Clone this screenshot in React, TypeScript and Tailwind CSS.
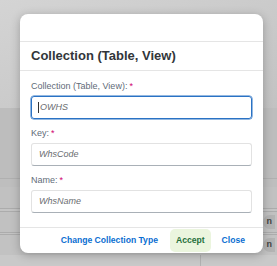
import React from "react";

function Field({
  label,
  placeholder,
  focused,
}: {
  label: string;
  placeholder: string;
  focused?: boolean;
}) {
  return (
    <div className="flex flex-col">
      <label className="h-[11px] text-[9px] leading-[11px] text-[#5f6b78]">
        {label}
        <span className="ml-[2px] text-[#d0006f]">*</span>
      </label>
      <div
        className={
          focused
            ? "mt-[4px] flex h-[23px] items-center rounded-[3px] border border-[#2a72c4] px-[6px] shadow-[0_0_0_0.5px_#2a72c4]"
            : "mt-[4px] flex h-[23px] items-center rounded-[3px] border border-[#e2e2e2] border-b-[#a9b0b7] px-[7px]"
        }
      >
        {focused && <span className="mr-[1px] h-[11px] w-px bg-[#333]" />}
        <span className="text-[9px] italic text-[#6a6d70]">{placeholder}</span>
      </div>
    </div>
  );
}

export default function App() {
  return (
    <div
      className="relative h-[266px] w-[277px] overflow-hidden bg-[#c3c3c3]"
      style={{ fontFamily: '"Liberation Sans", Arial, sans-serif' }}
    >
      {/* page behind the overlay */}
      <div className="flex h-full flex-col">
        <div className="h-[108px] bg-gradient-to-br from-[#d4d4d4] to-[#c2c2c2]" />
        <div className="h-[70px] bg-[#bdbdbd]" />
        <div className="h-[9px] border-t border-[#b0b0b0] bg-[#bebebe]" />
        <div className="h-[21px] bg-[#c1c1c1]" />
        <div className="h-[4px] border-y border-[#acacac] bg-[#c4c4c4]" />
        <div className="flex h-[20px] items-center justify-end bg-[#c1c1c1] pr-[2px]">
          <span className="rounded-l-full bg-[#b3b3b3] pl-[4px] pr-[3px] text-[9px] font-bold text-[#444]">
            n
          </span>
        </div>
        <div className="h-[3px] border-y border-[#acacac] bg-[#c4c4c4]" />
        <div className="flex h-[20px] items-center justify-end bg-[#c2c2c2] pr-[2px]">
          <span className="rounded-l-full bg-[#b3b3b3] pl-[4px] pr-[3px] text-[9px] font-bold text-[#444]">
            n
          </span>
        </div>
        <div className="flex flex-1 bg-[#c9c9c9]">
          <div className="w-[201px] border-r border-[#b2b2b2]" />
        </div>
      </div>

      {/* dialog */}
      <div className="absolute left-[20px] top-[14px] flex h-[239px] w-[243px] flex-col overflow-hidden rounded-[8px] bg-white shadow-[0_2px_10px_rgba(0,0,0,0.25)]">
        <div className="h-[28px] border-b border-[#e5e5e5]" />
        <div className="flex h-[29px] items-center border-b border-[#e5e5e5] px-[11px]">
          <h1 className="text-[13px] font-bold text-[#32363a]">Collection (Table, View)</h1>
        </div>
        <div className="flex flex-1 flex-col gap-[9px] px-[11px] pt-[10px]">
          <Field label="Collection (Table, View):" placeholder="OWHS" focused />
          <Field label="Key:" placeholder="WhsCode" />
          <Field label="Name:" placeholder="WhsName" />
        </div>
        <div className="flex h-[26px] items-center justify-end border-t border-[#e5e5e5] pr-[18px]">
          <button className="mr-[12px] text-[8.6px] font-bold text-[#0a6ed1]">Change Collection Type</button>
          <button className="h-[23px] rounded-[5px] bg-[#ebf5de] px-[6px] text-[8.6px] font-bold text-[#256f3a]">
            Accept
          </button>
          <button className="ml-[11px] text-[8.6px] font-bold text-[#0a6ed1]">Close</button>
        </div>
      </div>
    </div>
  );
}
